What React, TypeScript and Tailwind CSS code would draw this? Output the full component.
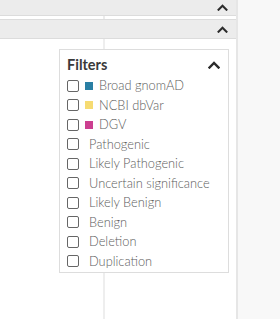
import React from "react";

const Chevron = ({ className }: { className?: string }) => (
  <svg viewBox="0 0 12 8" className={className} fill="none">
    <polyline points="1.5,6.5 6,2 10.5,6.5" stroke="#2b2b2b" strokeWidth="2.4" strokeLinecap="square" />
  </svg>
);

interface FilterItem {
  label: string;
  swatch?: string;
}

const filters: FilterItem[] = [
  { label: "Broad gnomAD", swatch: "bg-[#2a7fa4]" },
  { label: "NCBI dbVar", swatch: "bg-[#f6db72]" },
  { label: "DGV", swatch: "bg-[#cc3f90]" },
  { label: "Pathogenic" },
  { label: "Likely Pathogenic" },
  { label: "Uncertain significance" },
  { label: "Likely Benign" },
  { label: "Benign" },
  { label: "Deletion" },
  { label: "Duplication" },
];

export default function App() {
  return (
    <div className="w-[280px] h-[319px] flex bg-white overflow-hidden" style={{ fontFamily: "Lato, 'Open Sans', sans-serif" }}>
      <div className="w-[236px] relative flex flex-col">
        {/* top section bar */}
        <div className="h-[16px] bg-[#ececec] border-b border-[#dcdcdc] flex items-center justify-end pr-[8px]">
          <Chevron className="w-[11px] h-[7px]" />
        </div>
        <div className="h-[3px] flex">
          <div className="w-[105px] border-r-2 border-[#ececec]" />
        </div>
        {/* second bar */}
        <div className="h-[20px] bg-[#ececec] border-y border-[#dcdcdc] flex items-center justify-end pr-[8px]">
          <Chevron className="w-[11px] h-[7px]" />
        </div>
        <div className="flex-1 flex">
          <div className="w-[105px] border-r-2 border-[#eeeeee]" />
        </div>

        {/* filters panel */}
        <div className="absolute left-[59px] top-[49px] w-[170px] h-[224px] bg-white border border-[#dddddd] px-[7px] pt-[6px]">
          <div className="flex items-center justify-between h-[17px]">
            <span className="text-[14.5px] font-bold text-[#3a3a3a]">Filters</span>
            <Chevron className="w-[12px] h-[8px] mr-[1px]" />
          </div>
          <div className="mt-[3px] flex flex-col">
            {filters.map((f) => (
              <label key={f.label} className="h-[19.5px] flex items-center text-[12.8px] font-light text-[#5c5c5c]">
                <span className="w-[12px] h-[12px] border border-[#666] rounded-[2px] bg-white shrink-0" />
                {f.swatch ? (
                  <span className={`w-[8px] h-[8px] ml-[6px] mr-[6px] shrink-0 ${f.swatch}`} />
                ) : (
                  <span className="w-[10px] shrink-0" />
                )}
                <span className="whitespace-nowrap">{f.label}</span>
              </label>
            ))}
          </div>
        </div>
      </div>
      <div className="flex-1 border-l-2 border-[#e6e6e6] bg-[#f8f8f8]" />
    </div>
  );
}
